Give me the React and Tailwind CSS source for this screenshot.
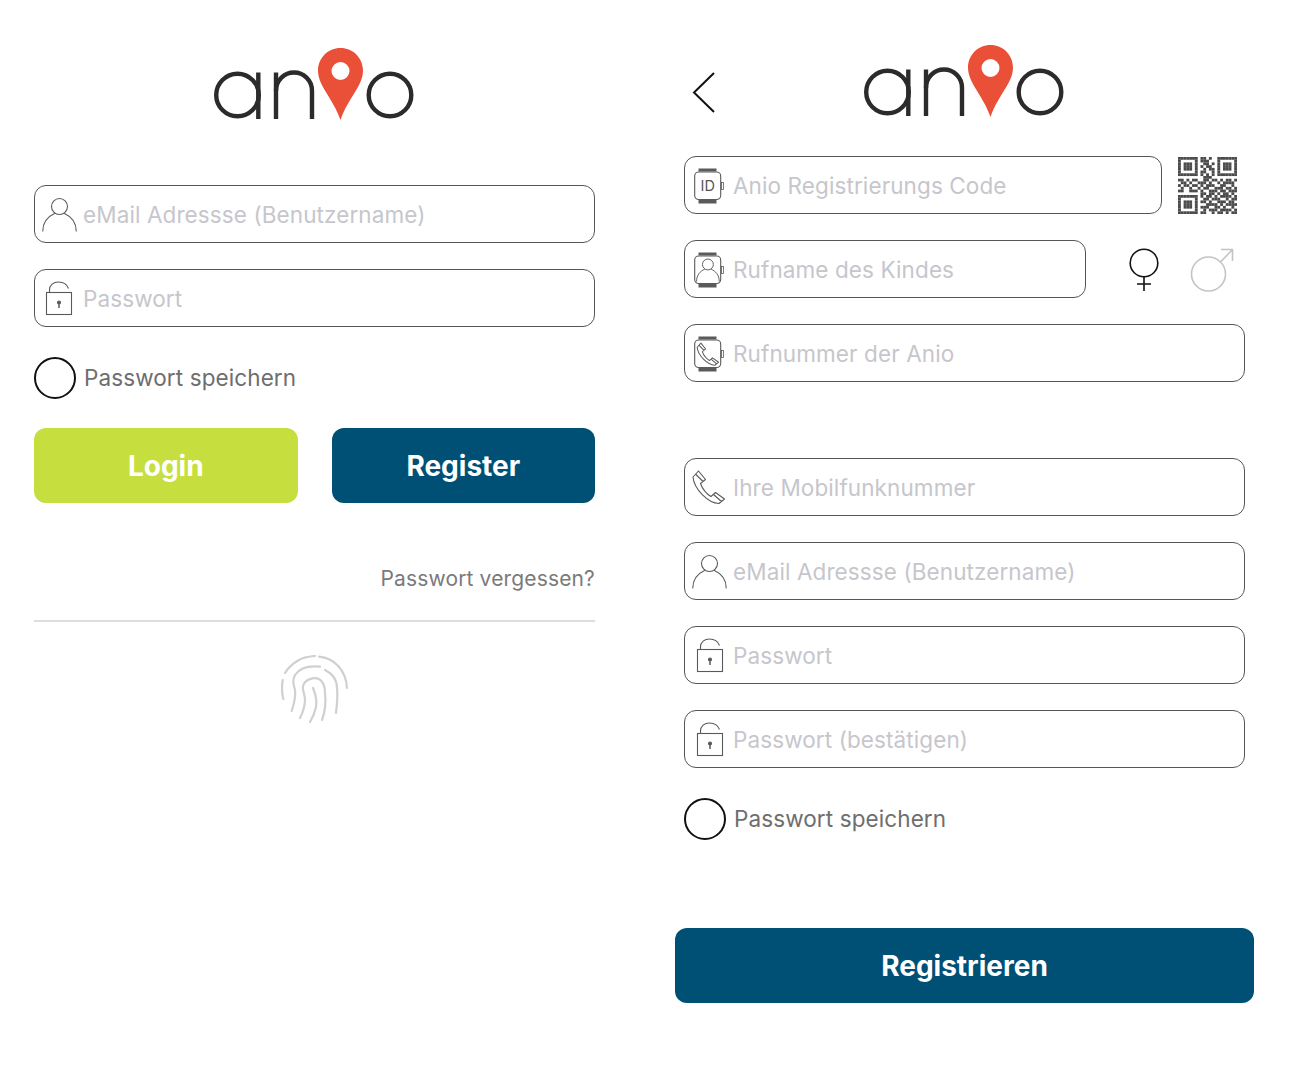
const font = { fontFamily: '"Inter","Liberation Sans",sans-serif' };

function Logo() {
  return (
    <svg width="202" height="74" viewBox="0 0 202 74" role="img" aria-label="anio" className="block">
      <g fill="none" stroke="#2b2b2b" strokeWidth="4.400">
        <circle cx="23.500" cy="47" r="21.300" />
        <path d="M44.300 24.500V71" />
        <path d="M62 24.500V71" />
        <path d="M62 43c0-11 8.500-18.500 18-18.500S98 32 98 43v28" />
        <circle cx="176" cy="47" r="21.300" />
      </g>
      <path fillRule="evenodd" fill="#ea4f37" d="M126.500 0C114 0 104 10 104 22.500C104 38 119 50 126.500 72C134 50 149 38 149 22.500C149 10 139 0 126.500 0ZM126.500 14a9 9 0 1 1 0 18a9 9 0 1 1 0-18Z" />
    </svg>
  );
}

const gray = "#5a5a5a";

function UserGlyph({ x = 0, y = 0, s = 1, w = 1.1 }) {
  return (
    <g transform={`translate(${x} ${y}) scale(${s})`} fill="none" stroke={gray} strokeWidth={w}>
      <circle cx="17.500" cy="9.500" r="8" />
      <path d="M0.800 34C0.800 25 6 19.500 12.500 16.500M34.200 34C34.200 25 29 19.500 22.500 16.500" strokeLinecap="round" />
    </g>
  );
}

function UserIcon() {
  return <svg width="36" height="36" viewBox="0 0 36 36"><UserGlyph x="0" y="1" /></svg>;
}

function LockIcon() {
  return (
    <svg width="28" height="36" viewBox="0 0 28 36" fill="none" stroke={gray} strokeWidth="1.100" className="mt-[2px]">
      <rect x="1.500" y="11.500" width="25" height="22" />
      <path d="M4.500 11V9C4.500 4 8.500 1 13.500 1C18.500 1 22 3.500 23.500 7.500" />
      <circle cx="14" cy="21.500" r="1.500" fill={gray} />
      <path d="M14 22v5" strokeWidth="1.500" />
    </svg>
  );
}

function PhoneGlyph({ sw = 1.1 }) {
  return (
    <path
      fill="none"
      stroke={gray}
      strokeWidth={sw}
      strokeLinejoin="round"
      d="M6.500 1L13.500 9.500L8.500 13.500C10.500 19 14 23.500 19 26.500L23.500 22.500L32.500 29L27 33.500C16 33 2 19 1 7ZM3.500 4L11 11.500M21.500 24.500L29.500 31.500"
    />
  );
}

function PhoneIcon() {
  return <svg width="34" height="35" viewBox="0 0 34 35"><PhoneGlyph /></svg>;
}

function Watch({ children }) {
  return (
    <svg width="30" height="36" viewBox="0 0 30 36" fill="none" className="ml-[2px] mt-[1px]">
      <rect x="4.500" y="0.500" width="18" height="3" fill="#5a5a5a" />
      <rect x="4.500" y="32" width="18" height="3.500" fill="#5a5a5a" />
      <rect x="0.700" y="4" width="26" height="27.500" rx="4" stroke={gray} strokeWidth="1.100" />
      <rect x="27.500" y="14.500" width="2" height="7" stroke={gray} strokeWidth="0.800" />
      {children}
    </svg>
  );
}

function IdIcon() {
  return (
    <Watch>
      <text x="13.700" y="23" textAnchor="middle" fontSize="14.500" fill="#555" style={{ fontFamily: '"Inter",sans-serif' }}>ID</text>
    </Watch>
  );
}

function ChildIcon() {
  return <Watch><UserGlyph x="2" y="6" s="0.680" w="1.400" /></Watch>;
}

function CallIcon() {
  return <Watch><g transform="translate(2.500 6.500) scale(0.680)"><PhoneGlyph sw="1.500" /></g></Watch>;
}

function Field({ icon, label, className = "" }) {
  return (
    <div className={`flex h-[58px] items-center rounded-[12px] border border-[#555555] pl-[7px] ${className}`}>
      <span className="flex h-[36px] w-[41px] shrink-0 items-center justify-start">{icon}</span>
      <span className="pt-[2px] text-[22.500px] leading-none text-[#c6c6cc] tracking-[0.1px]">{label}</span>
    </div>
  );
}

function Remember() {
  return (
    <div className="flex items-center gap-[8px]">
      <span className="h-[42px] w-[42px] rounded-full border-2 border-[#111111]" />
      <span className="text-[22.500px] leading-none text-[#6e6e6e] tracking-[0.1px]">Passwort speichern</span>
    </div>
  );
}

function Fingerprint() {
  return (
    <svg width="70" height="70" viewBox="0 0 70 70" fill="none" stroke="#d0d0d0" strokeWidth="2.200" strokeLinecap="round">
      <path d="M38 1.700C53 3 65 15 66 33" />
      <path d="M34 1C27 1.500 21 3 17 5.500M17 5.500C11 9 7 13 4 18" />
      <path d="M1.700 25C0.500 32 0.800 38 2.300 44" />
      <path d="M10.700 56C13 49 15 42 14 35C12 28 11.500 25 14 20C18 14 27 10.500 39 11.700" />
      <path d="M44 15C52 19 56 25 56 33C57 42 56 50 55 58" />
      <path d="M19 63C22 57 24 52 24 45C24 39 21 35 22 31C24 24 33 22 38 24C43 27 44 33 44 38C45 47 44 57 41 65" />
      <path d="M32 33C35 40 36 46 35 52C34 57 32 62 29 67" />
    </svg>
  );
}

const qrRows = [
  "111111101101001111111",
  "100000101110001000001",
  "101110100110101011101",
  "101110101011001011101",
  "101110100101101011101",
  "100000101100101000001",
  "111111101010101111111",
  "000000000111000000000",
  "110101100110110101101",
  "011010011101001011110",
  "101101101011100110010",
  "010010010110011101101",
  "110011101001110110111",
  "000000001101101011010",
  "111111101011010111101",
  "100000100110111001011",
  "101110101101001110110",
  "101110100011110101111",
  "101110101110011010010",
  "100000100101110111101",
  "111111101100101101011",
];

function Qr() {
  const cells = [];
  qrRows.forEach((row, y) => {
    [...row].forEach((c, x) => {
      if (c === "1") cells.push(<rect key={`${x}-${y}`} x={x} y={y} width="1.020" height="1.020" />);
    });
  });
  return <svg width="59" height="57" viewBox="0 0 21 21" preserveAspectRatio="none" fill="#4a4a4a">{cells}</svg>;
}

function Female() {
  return (
    <svg width="32" height="44" viewBox="0 0 32 44" fill="none" stroke="#111" strokeWidth="1.600" className="mt-[2px]">
      <circle cx="16" cy="15" r="13.800" />
      <path d="M16 29V43M9 36H23" />
    </svg>
  );
}

function Male() {
  return (
    <svg width="46" height="46" viewBox="0 0 46 46" fill="none" stroke="#c4c4c4" strokeWidth="1.600" className="mt-[1px]">
      <circle cx="19.500" cy="27" r="17" />
      <path d="M31.500 15L43 3M32 2.500H43.500V14" />
    </svg>
  );
}

export default function App() {
  return (
    <div className="flex h-[1085px] w-[1300px] items-start bg-white" style={font}>
      <section className="ml-[34px] flex w-[561px] flex-col pt-[48px]">
        <div className="flex h-[72px] justify-center pl-[1px]"><Logo /></div>
        <div className="mt-[65px] flex flex-col gap-[26px]">
          <Field icon={<UserIcon />} label="eMail Adressse (Benutzername)" />
          <Field icon={<span className="ml-[3px]"><LockIcon /></span>} label="Passwort" />
        </div>
        <div className="mt-[30px]"><Remember /></div>
        <div className="mt-[29px] flex gap-[34px]">
          <button className="h-[75px] w-[264px] rounded-[12px] bg-[#c6df3f] text-[28px] font-bold text-white">Login</button>
          <button className="h-[75px] w-[264px] rounded-[12px] bg-[#004f75] text-[28px] font-bold text-white">Register</button>
        </div>
        <div className="mt-[65px] text-right text-[21px] leading-none tracking-[0.15px] text-[#7a7a7a]">Passwort vergessen?</div>
        <div className="mt-[31px] h-[2px] bg-[#dddddd]" />
        <div className="mt-[33px] flex justify-center pl-[2px]"><Fingerprint /></div>
      </section>

      <section className="ml-[89px] flex w-[561px] flex-col pt-[45px]">
        <div className="relative flex h-[72px] justify-center pl-[1px]">
          <svg className="absolute left-[8px] top-[27px]" width="24" height="42" viewBox="0 0 24 42" fill="none" stroke="#111" strokeWidth="2">
            <path d="M22 1L2 20.500L22 40" />
          </svg>
          <Logo />
        </div>
        <div className="mt-[39px] flex items-center">
          <Field icon={<IdIcon />} label="Anio Registrierungs Code" className="w-[478px]" />
          <span className="ml-[16px]"><Qr /></span>
        </div>
        <div className="mt-[26px] flex items-center">
          <Field icon={<ChildIcon />} label="Rufname des Kindes" className="w-[402px]" />
          <span className="ml-[42px]"><Female /></span>
          <span className="ml-[29px]"><Male /></span>
        </div>
        <Field icon={<CallIcon />} label="Rufnummer der Anio" className="mt-[26px]" />
        <div className="mt-[76px] flex flex-col gap-[26px]">
          <Field icon={<PhoneIcon />} label="Ihre Mobilfunknummer" />
          <Field icon={<UserIcon />} label="eMail Adressse (Benutzername)" />
          <Field icon={<span className="ml-[4px]"><LockIcon /></span>} label="Passwort" />
          <Field icon={<span className="ml-[4px]"><LockIcon /></span>} label="Passwort (bestätigen)" />
        </div>
        <div className="mt-[30px]"><Remember /></div>
        <button className="-mx-[9px] mt-[88px] h-[75px] rounded-[12px] bg-[#004f75] text-[28px] font-bold text-white">Registrieren</button>
      </section>
    </div>
  );
}
